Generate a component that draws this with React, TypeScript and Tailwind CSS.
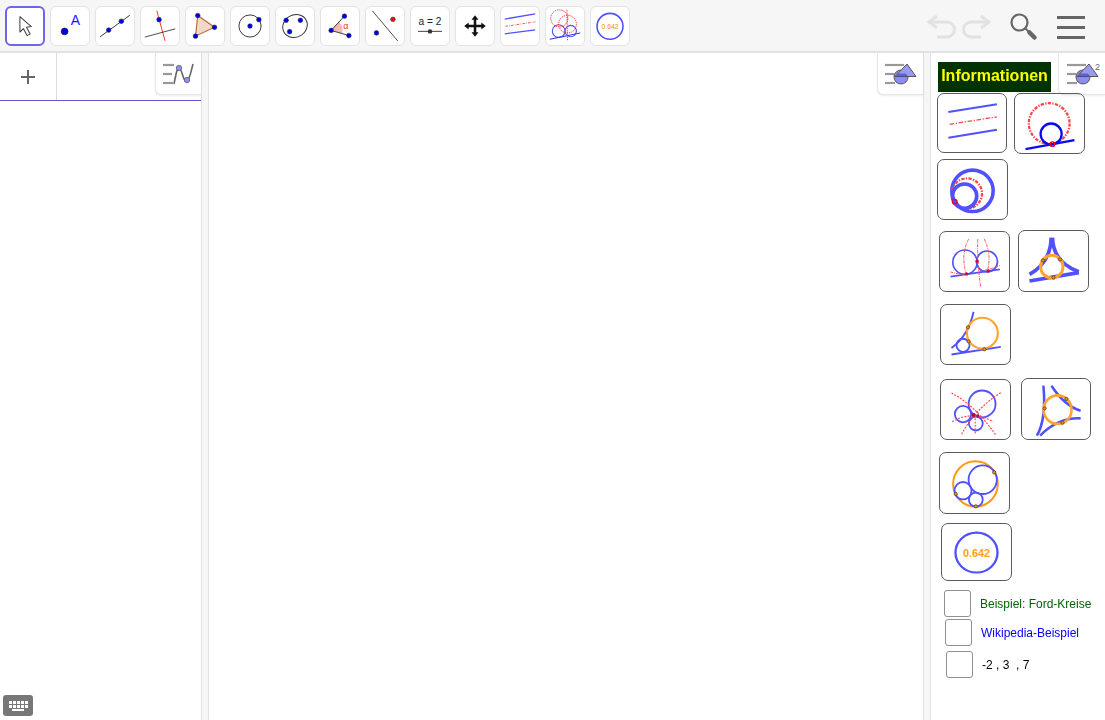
import type { ReactNode } from 'react'

const BLUE = '#5050ff'
const RED = '#ff4545'
const ORANGE = '#ffa52e'

function Dot({ x, y, fill = '#0000e0', r = 7.5 }: { x: number; y: number; fill?: string; r?: number }) {
  return <circle cx={x} cy={y} r={r} fill={fill} stroke="#333" strokeWidth={1.5} />
}

function ToolButton({ children, active }: { children: ReactNode; active?: boolean }) {
  return (
    <div
      className={`h-[40px] w-[40px] shrink-0 rounded-[6px] bg-white ${
        active ? 'border-[2px] border-[#6e65e8]' : 'border border-[#e3e3e3]'
      }`}
    >
      <svg viewBox="0 0 120 120" className="h-full w-full">
        {children}
      </svg>
    </div>
  )
}

function Toolbar() {
  return (
    <div className="flex h-[53px] shrink-0 items-start border-b-2 border-[#e2e2e2] bg-[#f6f6f6] pl-[5px] pt-[6px]">
      <div className="flex gap-[5px]">
        <ToolButton active>
          <path d="M43 29 L43 80 L55 69 L67 92 L77 87 L65 64 L81 62 Z" fill="#fff" stroke="#444" strokeWidth={3.5} strokeLinejoin="round" />
        </ToolButton>
        <ToolButton>
          <circle cx={43} cy={77} r={11} fill="#0000e0" stroke="#222" strokeWidth={1.5} />
          <text x={62} y={57} fontSize={44} fill="#1414ff" fontFamily="Liberation Sans, sans-serif">A</text>
        </ToolButton>
        <ToolButton>
          <line x1={13} y1={94} x2={107} y2={26} stroke="#333" strokeWidth={3} />
          <Dot x={40} y={73} />
          <Dot x={80} y={45} />
        </ToolButton>
        <ToolButton>
          <line x1={50} y1={12} x2={76} y2={107} stroke="#ff2a2a" strokeWidth={3} />
          <line x1={12} y1={95} x2={108} y2={69} stroke="#444" strokeWidth={3} />
          <Dot x={57} y={40} />
        </ToolButton>
        <ToolButton>
          <polygon points="37,27 90,64 30,92" fill="#f2d9c6" stroke="#b5653a" strokeWidth={3.5} />
          <Dot x={37} y={27} />
          <Dot x={90} y={64} />
          <Dot x={30} y={92} />
        </ToolButton>
        <ToolButton>
          <circle cx={60} cy={60} r={35} fill="none" stroke="#333" strokeWidth={3} />
          <Dot x={60} y={60} />
          <Dot x={88} y={40} />
        </ToolButton>
        <ToolButton>
          <ellipse cx={60} cy={60} rx={40} ry={35} fill="none" stroke="#333" strokeWidth={3} transform="rotate(-30 60 60)" />
          <Dot x={32} y={42} />
          <Dot x={77} y={42} />
          <Dot x={43} y={78} />
        </ToolButton>
        <ToolButton>
          <path d="M32 74 L56 46 A34 34 0 0 1 66 83 Z" fill="#f7b8b8" />
          <line x1={32} y1={74} x2={74} y2={29} stroke="#333" strokeWidth={3} />
          <line x1={32} y1={74} x2={88} y2={90} stroke="#333" strokeWidth={3} />
          <Dot x={32} y={74} />
          <Dot x={74} y={29} />
          <Dot x={88} y={90} />
          <text x={70} y={70} fontSize={28} fill="#e83030" fontFamily="Liberation Sans, sans-serif">α</text>
        </ToolButton>
        <ToolButton>
          <line x1={20} y1={12} x2={100} y2={107} stroke="#444" strokeWidth={3} />
          <Dot x={33} y={82} />
          <Dot x={85} y={39} fill="#e01010" />
        </ToolButton>
        <ToolButton>
          <text x={60} y={58} fontSize={32} textAnchor="middle" fill="#222" fontFamily="Liberation Sans, sans-serif">a = 2</text>
          <line x1={22} y1={77} x2={98} y2={77} stroke="#555" strokeWidth={3.5} />
          <circle cx={60} cy={77} r={7} fill="#333" />
        </ToolButton>
        <ToolButton>
          <path d="M60 26 L71 40 L64 40 L64 56 L80 56 L80 49 L94 60 L80 71 L80 64 L64 64 L64 80 L71 80 L60 94 L49 80 L56 80 L56 64 L40 64 L40 71 L26 60 L40 49 L40 56 L56 56 L56 40 L49 40 Z" fill="#111" />
        </ToolButton>
        <ToolButton>
          <line x1={12} y1={38} x2={108} y2={22} stroke={BLUE} strokeWidth={4} />
          <line x1={14} y1={61} x2={108} y2={47} stroke={RED} strokeWidth={3} strokeDasharray="8 4 2 4" />
          <line x1={12} y1={85} x2={108} y2={72} stroke={BLUE} strokeWidth={4} />
        </ToolButton>
        <ToolButton>
          <circle cx={40} cy={76} r={20} fill="none" stroke={BLUE} strokeWidth={3.5} />
          <circle cx={78} cy={76} r={18} fill="none" stroke={BLUE} strokeWidth={3.5} />
          <circle cx={42} cy={36} r={27} fill="none" stroke="#ff2020" strokeWidth={3} strokeDasharray="4 3" />
          <circle cx={68} cy={54} r={28} fill="none" stroke="#ff2020" strokeWidth={3} strokeDasharray="4 3" />
          <line x1={12} y1={102} x2={108} y2={82} stroke="#3030e8" strokeWidth={3.5} />
          <line x1={66} y1={10} x2={68} y2={108} stroke="#ff2020" strokeWidth={3} strokeDasharray="4 3" />
        </ToolButton>
        <ToolButton>
          <circle cx={60} cy={61} r={41} fill="none" stroke={BLUE} strokeWidth={5} />
          <text x={60} y={68} fontSize={21.6} textAnchor="middle" fill="#f09000" fontFamily="Liberation Sans, sans-serif">0.642</text>
        </ToolButton>
      </div>
      <div className="ml-auto mr-[20px] mt-[5px] flex items-center">
        <svg viewBox="0 0 30 26" className="h-[26px] w-[30px]" fill="none" stroke="#e2e2e2" strokeWidth={3}>
          <path d="M21 23 H11 M21 23 A7.5 7.5 0 0 0 21 8 H4" />
          <path d="M11 2 L3 8 L11 14" />
        </svg>
        <svg viewBox="0 0 30 26" className="ml-[6px] h-[26px] w-[30px]" fill="none" stroke="#e2e2e2" strokeWidth={3}>
          <path d="M9 23 H19 M9 23 A7.5 7.5 0 0 1 9 8 H26" />
          <path d="M19 2 L27 8 L19 14" />
        </svg>
        <svg viewBox="0 0 32 32" className="ml-[16px] h-[32px] w-[32px]" fill="none" stroke="#666">
          <circle cx={11.5} cy={11.5} r={8} strokeWidth={2.2} />
          <path d="M17.5 17.5 L21 21" strokeWidth={2} />
          <path d="M21.5 21.5 L26.5 26.5" strokeWidth={4.5} strokeLinecap="round" />
        </svg>
        <div className="ml-[17px] flex w-[28px] flex-col gap-[7px]">
          <div className="h-[3px] bg-[#666]" />
          <div className="h-[3px] bg-[#666]" />
          <div className="h-[3px] bg-[#666]" />
        </div>
      </div>
    </div>
  )
}

function StyleBarToggle({ children, className }: { children: ReactNode; className: string }) {
  return (
    <div className={`absolute top-0 h-[42px] rounded-bl-[6px] border-b border-l border-[#e6e6e6] bg-white shadow-[0_1px_2px_rgba(0,0,0,0.08)] ${className}`}>
      {children}
    </div>
  )
}

function ShapesIcon({ sup }: { sup?: boolean }) {
  return (
    <svg viewBox="0 0 36 22" className="h-[22px] w-[36px]">
      <line x1={0} y1={2} x2={19} y2={2} stroke="#999" strokeWidth={2.2} />
      <line x1={0} y1={11} x2={9} y2={11} stroke="#999" strokeWidth={2.2} />
      <line x1={0} y1={20} x2={10} y2={20} stroke="#999" strokeWidth={2.2} />
      <circle cx={16} cy={14} r={7} fill="#8c8cf2" stroke="#555" strokeWidth={1} />
      <polygon points="22,1 10,13.5 31,13.5" fill="#9a9af0" stroke="#555" strokeWidth={1} />
      <path d="M13 10.5 L21 10.5 L23 13.5 L11 13.5 Z" fill="#3a3ac0" opacity={0.6} />
      {sup && <text x={28} y={7} fontSize={9} fill="#666" fontFamily="Liberation Sans, sans-serif">2</text>}
    </svg>
  )
}

function Thumb({ className, children }: { className: string; children: ReactNode }) {
  return (
    <div className={`absolute rounded-[7px] border-[1.5px] border-[#5c5c5c] ${className}`}>
      <svg viewBox="0 0 210 180" preserveAspectRatio="none" className="h-full w-full" fill="none">
        {children}
      </svg>
    </div>
  )
}

function RedDot({ x, y }: { x: number; y: number }) {
  return <circle cx={x} cy={y} r={7} stroke="#e80030" strokeWidth={4} />
}

function OrangeDot({ x, y }: { x: number; y: number }) {
  return <circle cx={x} cy={y} r={5} fill="#e09020" stroke="#553300" strokeWidth={2} />
}

function Check({ className }: { className: string }) {
  return <div className={`absolute h-[27px] w-[27px] rounded-[3px] border-[1.5px] border-[#909090] bg-white ${className}`} />
}

function InfoPanel() {
  return (
    <div className="relative w-[174px] shrink-0 bg-white font-['Liberation_Sans',sans-serif]">
      <div className="absolute left-[7px] top-[9px] flex h-[30px] w-[113px] items-center justify-center bg-[#003300] pb-[2px] text-[16px] font-bold text-[#ffff00] will-change-transform">
        Informationen
      </div>
      <StyleBarToggle className="left-[127px] w-[47px]">
        <div className="pl-[8px] pt-[10px]">
          <ShapesIcon sup />
        </div>
      </StyleBarToggle>

      <Thumb className="left-[6px] top-[40px] h-[60px] w-[70px]">
        <line x1={32} y1={56} x2={182} y2={32} stroke={BLUE} strokeWidth={6} />
        <line x1={36} y1={94} x2={182} y2={71} stroke={RED} strokeWidth={4} strokeDasharray="14 5 4 5" />
        <line x1={32} y1={136} x2={182} y2={111} stroke={BLUE} strokeWidth={6} />
      </Thumb>
      <Thumb className="left-[83px] top-[40px] h-[61px] w-[71px]">
        <circle cx={104} cy={90} r={62} stroke={RED} strokeWidth={7} strokeDasharray="10 4 4 4" />
        <circle cx={110} cy={122} r={32} stroke="#0a0af0" strokeWidth={7} />
        <line x1={32} y1={168} x2={181} y2={141} stroke="#0a0af0" strokeWidth={7} />
        <RedDot x={114} y={153} />
      </Thumb>
      <Thumb className="left-[6px] top-[106px] h-[61px] w-[71px]">
        <circle cx={105} cy={94} r={63} stroke={BLUE} strokeWidth={11} />
        <circle cx={88} cy={102} r={46} stroke={RED} strokeWidth={7} strokeDasharray="10 4 4 4" />
        <circle cx={81} cy={110} r={37} stroke={BLUE} strokeWidth={11} />
        <RedDot x={51} y={127} />
      </Thumb>

      <Thumb className="left-[8px] top-[178px] h-[61px] w-[71px]">
        <circle cx={76} cy={92} r={37} stroke={BLUE} strokeWidth={5} />
        <circle cx={143} cy={90} r={32} stroke={BLUE} strokeWidth={5} />
        <line x1={32} y1={136} x2={182} y2={114} stroke={BLUE} strokeWidth={5.5} />
        <path d="M87 22 Q62 70 80 128 M115 22 Q112 90 124 168 M135 22 Q158 70 144 119 M32 122 Q60 130 85 130 M120 120 Q150 115 182 102" stroke={RED} strokeWidth={3} strokeDasharray="8 3 3 3" />
        <circle cx={81} cy={128} r={5} fill="#e00030" />
        <circle cx={113} cy={89} r={5} fill="#e00030" />
        <circle cx={147} cy={119} r={5} fill="#e00030" />
      </Thumb>
      <Thumb className="left-[87px] top-[177px] h-[62px] w-[71px]">
        <path d="M98 20 Q96 95 32 130 M102 20 Q104 95 182 122" stroke={BLUE} strokeWidth={11} />
        <path d="M32 150 L182 125" stroke={BLUE} strokeWidth={11} />
        <circle cx={100} cy={107} r={34} stroke={ORANGE} strokeWidth={9} />
        <OrangeDot x={73} y={88} />
        <OrangeDot x={125} y={85} />
        <OrangeDot x={105} y={140} />
      </Thumb>

      <Thumb className="left-[9px] top-[251px] h-[61px] w-[71px]">
        <path d="M99 21 Q84 93 32 131" stroke={BLUE} strokeWidth={6} />
        <line x1={32} y1={151} x2={182} y2={128} stroke={BLUE} strokeWidth={5.5} />
        <circle cx={67} cy={123} r={20} stroke={BLUE} strokeWidth={5.5} />
        <circle cx={126} cy={86} r={47} stroke={ORANGE} strokeWidth={6.5} />
        <OrangeDot x={82} y={68} />
        <OrangeDot x={84} y={111} />
        <OrangeDot x={132} y={135} />
      </Thumb>
      <Thumb className="left-[9px] top-[326px] h-[61px] w-[71px]">
        <circle cx={125} cy={73} r={41} stroke={BLUE} strokeWidth={5.5} />
        <circle cx={67} cy={104} r={25} stroke={BLUE} strokeWidth={5.5} />
        <circle cx={106} cy={133} r={21} stroke={BLUE} strokeWidth={5.5} />
        <path d="M32 40 Q104 77 166 167 M182 39 Q104 87 62 167 M34 127 Q94 92 159 127 M104 107 L104 167" stroke={RED} strokeWidth={3.5} strokeDasharray="6 4" />
        <circle cx={99} cy={107} r={6} fill="#c00030" />
        <circle cx={112} cy={109} r={4.5} fill="#c00030" />
      </Thumb>
      <Thumb className="left-[90px] top-[325px] h-[62px] w-[70px]">
        <path d="M66 20 Q76 120 46 170 M91 20 Q131 80 181 95 M56 170 Q111 115 181 118" stroke={BLUE} strokeWidth={8} />
        <circle cx={110} cy={92} r={43} stroke={ORANGE} strokeWidth={8} />
        <OrangeDot x={70} y={88} />
        <OrangeDot x={137} y={60} />
        <OrangeDot x={125} y={131} />
      </Thumb>
      <Thumb className="left-[8px] top-[399px] h-[62px] w-[71px]">
        <circle cx={108} cy={93} r={68} stroke="#ff9a10" strokeWidth={6} />
        <circle cx={130} cy={80} r={43} stroke={BLUE} strokeWidth={5.5} />
        <circle cx={70} cy={113} r={26} stroke={BLUE} strokeWidth={5.5} />
        <circle cx={109} cy={140} r={21} stroke={BLUE} strokeWidth={5.5} />
        <OrangeDot x={165} y={58} />
        <OrangeDot x={48} y={123} />
        <OrangeDot x={109} y={160} />
      </Thumb>
      <Thumb className="left-[10px] top-[470px] h-[58px] w-[71px]">
        <circle cx={105} cy={92} r={64} stroke={BLUE} strokeWidth={7} />
        <text x={105} y={105} fontSize={33} fontWeight="bold" textAnchor="middle" fill="#ffa020" fontFamily="Liberation Sans, sans-serif">0.642</text>
      </Thumb>

      <Check className="left-[13px] top-[537px]" />
      <div className="absolute left-[49px] top-[544px] whitespace-nowrap text-[12px] leading-[14px] text-[#006400] will-change-transform">Beispiel: Ford-Kreise</div>
      <Check className="left-[14px] top-[566px]" />
      <div className="absolute left-[50px] top-[573px] whitespace-nowrap text-[12px] leading-[14px] text-[#0000ff] will-change-transform">Wikipedia-Beispiel</div>
      <Check className="left-[15px] top-[598px]" />
      <div className="absolute left-[51px] top-[605px] whitespace-pre text-[12px] leading-[14px] text-black will-change-transform">-2 , 3  , 7</div>
    </div>
  )
}

export default function App() {
  return (
    <div className="flex h-[720px] w-[1105px] flex-col overflow-hidden bg-white">
      <Toolbar />
      <div className="flex min-h-0 flex-1">
        {/* Algebra */}
        <div className="relative w-[201px] shrink-0">
          <div className="flex h-[48px] border-b border-[#6557d2]">
            <div className="flex w-[57px] items-center justify-center border-r border-[#dcdcdc]">
              <svg viewBox="0 0 16 16" className="h-[16px] w-[16px]" stroke="#666" strokeWidth={2}>
                <path d="M8 1 V15 M1 8 H15" />
              </svg>
            </div>
          </div>
          <StyleBarToggle className="right-0 w-[46px]">
            <div className="pl-[7px] pt-[10px]">
              <svg viewBox="0 0 32 22" className="h-[22px] w-[32px]" fill="none">
                <line x1={0} y1={2} x2={11} y2={2} stroke="#999" strokeWidth={2.2} />
                <line x1={0} y1={11} x2={9} y2={11} stroke="#999" strokeWidth={2.2} />
                <line x1={0} y1={20} x2={10} y2={20} stroke="#999" strokeWidth={2.2} />
                <path d="M11 21 C13 11 14 5 16 5 C19 5 20 20 24 18 C27 16 28 8 30 1" stroke="#666" strokeWidth={1.6} />
                <circle cx={16} cy={5} r={2.7} fill="#9090f0" stroke="#555" strokeWidth={0.7} />
                <circle cx={24} cy={17} r={2.7} fill="#9090f0" stroke="#555" strokeWidth={0.7} />
              </svg>
            </div>
          </StyleBarToggle>
          <div className="absolute bottom-[4px] left-[3px] flex h-[21px] w-[30px] flex-col items-center justify-center gap-[1px] rounded-[3px] bg-[#777]">
            <div className="grid grid-cols-5 gap-[1px]">
              {Array.from({ length: 10 }).map((_, i) => (
                <div key={i} className="h-[3px] w-[3px] bg-white" />
              ))}
            </div>
            <div className="h-[2px] w-[12px] bg-white" />
          </div>
        </div>
        <div className="w-[8px] shrink-0 border-x border-[#e2e2e2] bg-[#f6f6f6]" />
        {/* Graphics */}
        <div className="relative flex-1">
          <StyleBarToggle className="right-0 w-[46px]">
            <div className="pl-[7px] pt-[10px]">
              <ShapesIcon />
            </div>
          </StyleBarToggle>
        </div>
        <div className="w-[8px] shrink-0 border-x border-[#e2e2e2] bg-[#f6f6f6]" />
        <InfoPanel />
      </div>
    </div>
  )
}
